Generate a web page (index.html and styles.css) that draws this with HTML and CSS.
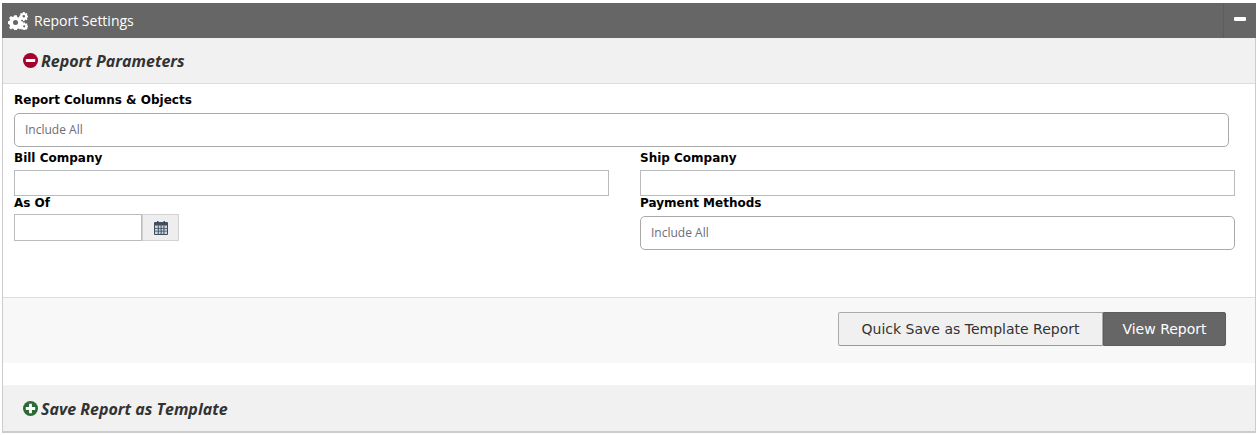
FILE: index.html
```html
<!DOCTYPE html>
<html lang="en">
<head>
  <meta charset="UTF-8" />
  <title>Report Settings</title>
  <link rel="stylesheet" href="styles.css">
</head>
<body>
  <div class="panel">
    <div class="panel-head">
      <svg class="cogs" viewBox="0 0 20 18" width="20" height="18">
        <g fill="#fff">
          <path fill-rule="evenodd" d="M6.2 3.2h2.6l.4 1.9 1.3.5 1.6-1 1.8 1.8-1 1.6.5 1.3 1.9.4v2.6l-1.9.4-.5 1.3 1 1.6-1.8 1.8-1.6-1-1.3.5-.4 1.6H6.2l-.4-1.6-1.3-.5-1.6 1-1.8-1.8 1-1.6-.5-1.3L0 11.800V9.200l1.600-.4.500-1.300-1-1.600 1.800-1.800 1.600 1 1.300-.5zM7.500 8a2.500 2.500 0 1 0 0 5 2.500 2.500 0 0 0 0-5z"/>
          <path fill-rule="evenodd" d="M15 0h1.600l.3 1.100.7.300 1-.5.900 1-.6.900.3.700 1 .3v1.500l-1 .3-.3.700.6.900-1 1-1-.6-.7.300-.3 1.100H15l-.3-1.100-.7-.3-1 .6-1-1 .6-.9-.3-.7-1-.3V3.800l1-.3.3-.7-.6-.9 1-1 1 .5.700-.3zm.8 3a1.300 1.300 0 1 0 0 2.600 1.300 1.300 0 0 0 0-2.600z"/>
          <path fill-rule="evenodd" d="M15.500 10.500h1.400l.3 1 .6.200.9-.5.800.9-.5.800.3.600.9.300v1.300l-.9.300-.3.600.5.800-.8.900-.9-.5-.6.200-.3 1.100h-1.400l-.3-1.100-.6-.2-.9.5-.8-.9.5-.8-.3-.6-.9-.3v-1.300l.9-.3.300-.6-.5-.8.800-.9.900.5.600-.2zm.7 2.700a1.100 1.100 0 1 0 0 2.200 1.100 1.100 0 0 0 0-2.200z"/>
        </g>
      </svg>
      <span class="panel-title">Report Settings</span>
      <div class="panel-toggle"><span class="dash"></span></div>
    </div>

    <div class="section-head">
      <svg class="round-icon" viewBox="0 0 16 16" width="15" height="15">
        <circle cx="8" cy="8" r="8" fill="#a3022c"/>
        <rect x="3" y="6.500" width="10" height="3" rx="0.500" fill="#fff"/>
      </svg>
      <span>Report Parameters</span>
    </div>

    <div class="form-area">
      <div class="field">
        <label>Report Columns &amp; Objects</label>
        <div class="select-box wide">Include All</div>
      </div>
      <div class="form-grid">
        <div class="field">
          <label>Bill Company</label>
          <input class="text-input" type="text">
        </div>
        <div class="field">
          <label>Ship Company</label>
          <input class="text-input" type="text">
        </div>
        <div class="field">
          <label>As Of</label>
          <div class="date-row">
            <input class="text-input date-input" type="text">
            <div class="date-btn">
              <svg viewBox="0 0 14 15" width="14" height="15">
                <path fill="#3f4d5c" d="M1 2h2V1h1.500v1h5V1H11v1h2a1 1 0 0 1 1 1v11a1 1 0 0 1-1 1H1a1 1 0 0 1-1-1V3a1 1 0 0 1 1-1z"/>
                <path fill="#c9d3dc" d="M1 5.500h12V14H1z"/>
                <path fill="#3f4d5c" d="M3.800 5.500h1v8.500h-1zM6.600 5.500h1v8.500h-1zM9.400 5.500h1v8.500h-1zM1 8h12v.800H1zM1 10.800h12v.800H1z"/>
              </svg>
            </div>
          </div>
        </div>
        <div class="field">
          <label>Payment Methods</label>
          <div class="select-box">Include All</div>
        </div>
      </div>
    </div>

    <div class="action-bar">
      <button class="btn btn-light">Quick Save as Template Report</button>
      <button class="btn btn-dark">View Report</button>
    </div>

    <div class="section-head closed">
      <svg class="round-icon" viewBox="0 0 16 16" width="15" height="15">
        <circle cx="8" cy="8" r="8" fill="#2c6a35"/>
        <path fill="#fff" d="M6.500 3h3v3.500H13v3H9.500V13h-3V9.500H3v-3h3.500z"/>
      </svg>
      <span>Save Report as Template</span>
    </div>
  </div>
</body>
</html>
```

FILE: styles.css
```css
* {
  box-sizing: border-box;
}

body {
  margin: 0;
  padding: 3px 3px 0 2px;
  background: #fff;
  font-family: "Open Sans", sans-serif;
}

.panel {
  border-left: 1px solid #ccc;
  border-right: 1px solid #ccc;
  border-bottom: 2px solid #ccc;
}

.panel-head {
  height: 35px;
  margin-left: -1px;
  margin-right: -1px;
  background: #666;
  color: #fff;
  display: flex;
  align-items: center;
  padding-left: 6px;
}

.cogs {
  margin-right: 6px;
}

.panel-title {
  font-size: 14px;
  flex: 1;
}

.panel-toggle {
  width: 33px;
  height: 35px;
  border-left: 1px solid #5c5c5c;
  display: flex;
  align-items: center;
  justify-content: center;
}

.dash {
  width: 12px;
  height: 4px;
  background: #fff;
  border-radius: 1px;
  margin-bottom: 4px;
}

.section-head {
  height: 46px;
  background: #f1f1f1;
  border-bottom: 1px solid #ddd;
  display: flex;
  align-items: center;
  padding-left: 20px;
  font-size: 16px;
  font-weight: 700;
  font-style: italic;
  color: #333;
}

.section-head.closed {
  border-bottom: none;
  border-top: 1px solid #f4f4f4;
}

.round-icon {
  margin-right: 3px;
}

.form-area {
  height: 213px;
  padding: 9px 26px 0 11px;
  background: #fff;
}

.field label {
  display: block;
  font-family: "DejaVu Sans", sans-serif;
  font-size: 12px;
  font-weight: 700;
  line-height: 15px;
  color: #000;
}

.select-box {
  height: 34px;
  margin-top: 5px;
  padding-left: 10px;
  border: 1px solid #aaa;
  border-radius: 5px;
  background: #fff;
  font-size: 12px;
  line-height: 32px;
  color: #6d6d78;
}

.select-box.wide {
  margin-right: -20px;
  width: calc(100% - 0px);
}

.form-grid {
  display: grid;
  grid-template-columns: 595px 595px;
  column-gap: 31px;
  margin-top: 4px;
}

.text-input {
  display: block;
  width: 100%;
  height: 26px;
  margin-top: 4px;
  border: 1px solid #b8bcbf;
  padding: 0 4px;
  background: #fff;
}

.date-row {
  display: flex;
  margin-top: 3px;
}

.date-input {
  width: 128px;
  height: 27px;
  margin-top: 0;
}

.date-btn {
  width: 37px;
  height: 27px;
  background: #eee;
  border: 1px solid #d2d2d2;
  display: flex;
  align-items: center;
  justify-content: center;
}

.action-bar {
  height: 66px;
  margin-bottom: 22px;
  background: #f8f8f8;
  border-top: 1px solid #ddd;
  display: flex;
  justify-content: flex-end;
  align-items: flex-start;
  padding: 14px 29px 0 0;
}

.btn {
  height: 34px;
  font-family: "DejaVu Sans", sans-serif;
  font-size: 14px;
  cursor: pointer;
}

.btn-light {
  width: 265px;
  background: #f0f0f0;
  border: 1px solid #aaa;
  border-bottom-color: #999;
  border-radius: 2px 0 0 2px;
  color: #333;
}

.btn-dark {
  width: 123px;
  background: #666;
  border: 1px solid #5c5c5c;
  border-radius: 0 2px 2px 0;
  color: #fff;
}
```
